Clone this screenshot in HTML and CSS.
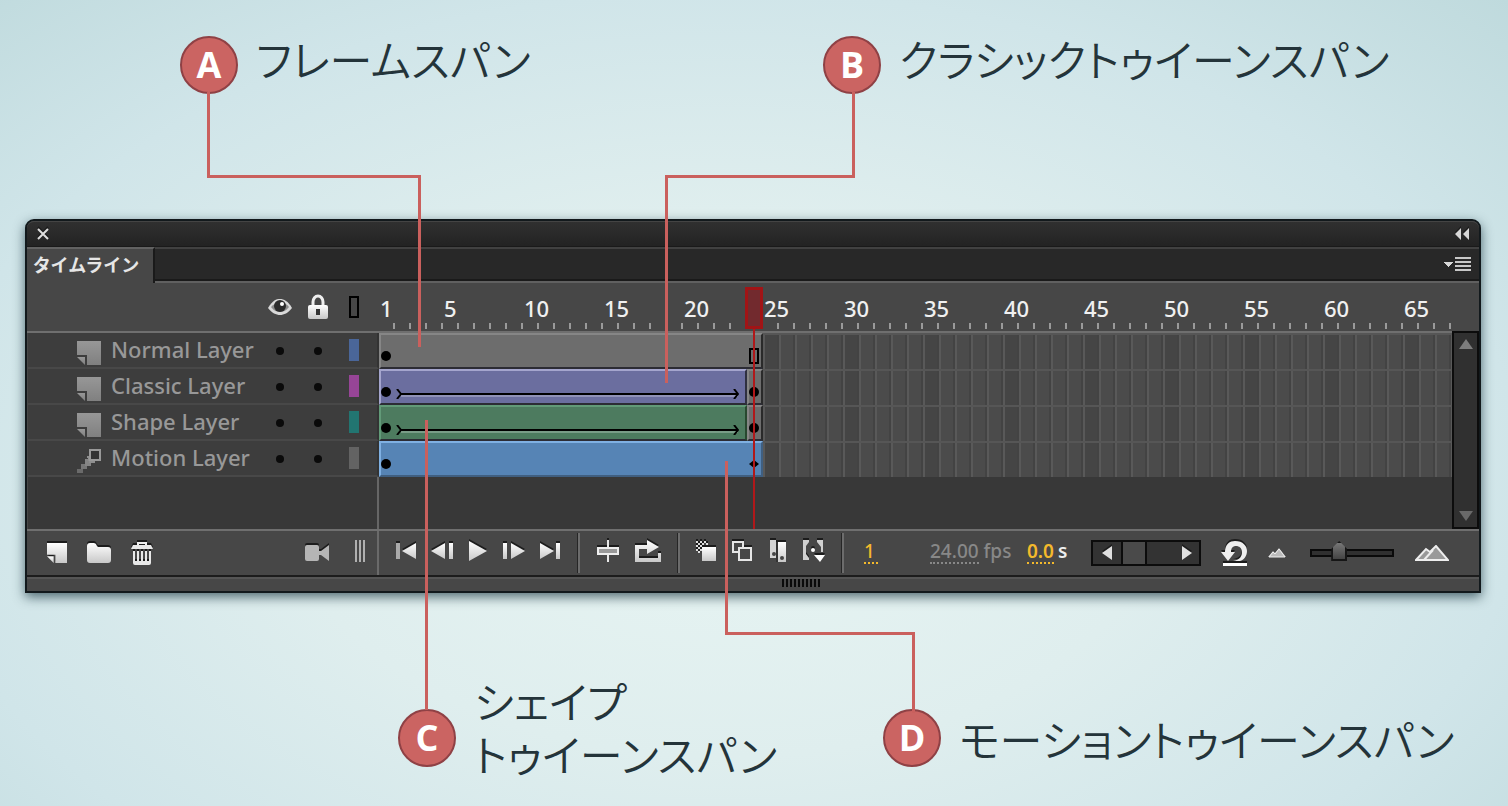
FILE: index.html
```html
<!DOCTYPE html>
<html lang="ja">
<head>
    <meta charset="UTF-8">
    <meta name="viewport" content="width=device-width, initial-scale=1.0">
    <title>タイムライン</title>
    <link rel="stylesheet" href="styles.css">
</head>
<body>

    <svg width="0" height="0" class="defs" aria-hidden="true">
        <defs>
            <linearGradient id="shine" x1="0" y1="0" x2="0" y2="1">
                <stop offset="0" stop-color="#fff"/>
                <stop offset="1" stop-color="#c8c8c8"/>
            </linearGradient>
            <linearGradient id="dull" x1="0" y1="0" x2="0" y2="1">
                <stop offset="0" stop-color="#979797"/>
                <stop offset="1" stop-color="#808080"/>
            </linearGradient>
            <symbol id="page" viewBox="0 0 24 24">
                <path d="M0 0h24v24H10V14H0z"/>
                <path d="M0 16h8v8z"/>
            </symbol>
        </defs>
    </svg>

    <div class="callouts callouts-top">
        <div class="callout">
            <span class="badge">A</span>
            <p class="caption">フレームスパン</p>
            <svg class="connector connector-a" width="216" height="255"><path d="M1.5 0V84.5H212.5V255"/></svg>
        </div>
        <div class="callout">
            <span class="badge">B</span>
            <p class="caption">クラシックトゥイーンスパン</p>
            <svg class="connector connector-b" width="190" height="291"><path d="M188.5 0V84.5H1.5V291"/></svg>
        </div>
    </div>

    <div class="panel">
        <div class="title-bar">
            <button aria-label="閉じる"><svg width="12" height="12"><path d="M1 1L11 11M11 1L1 11" stroke="#ddd" stroke-width="2"/></svg></button>
            <button aria-label="たたむ"><svg width="14" height="12"><path d="M6 0v12L0 6zM14 0v12L8 6z" fill="#d8d8d8"/></svg></button>
        </div>

        <div class="tab-bar">
            <button class="tab">タイムライン</button>
            <button class="menu" aria-label="メニュー">
                <svg width="28" height="16" shape-rendering="crispEdges"><path d="M0 5h10L5 10z" fill="#d8d8d8"/><path d="M12 0h16v2H12zM12 4h16v2H12zM12 8h16v2H12zM12 12h16v2H12z" fill="#c8c8c8"/></svg>
            </button>
        </div>

        <div class="timeline">
            <div class="layers">
                <div class="layer-head">
                    <span></span>
                    <span></span>
                    <button aria-label="表示">
                        <svg width="24" height="20">
                            <path d="M0 11C5 3 8 2 12 2s8 2 12 9c-4 5-8 7-12 7S4 16 0 11z" fill="#d9d9d9"/>
                            <path d="M3 10C7 5 17 4 21 10c-3 4-6 5-9 5s-6-1-9-5z" fill="#8b8b8b"/>
                            <circle cx="12" cy="9" r="6" fill="#2b2b2b"/>
                            <circle cx="14" cy="7" r="2" fill="#fff"/>
                        </svg>
                    </button>
                    <button aria-label="ロック">
                        <svg width="20" height="26">
                            <path d="M5 13V8a5 6 0 0 1 10 0v5" fill="none" stroke="#eee" stroke-width="3"/>
                            <rect y="11" width="20" height="14" rx="2" fill="url(#shine)"/>
                            <path d="M8 15h4v6H8z" fill="#333"/>
                        </svg>
                    </button>
                    <button aria-label="アウトライン"><span class="outline-box"></span></button>
                </div>
                <div class="layer">
                    <svg class="layer-icon" width="24" height="24" fill="url(#dull)"><use href="#page"/></svg>
                    <span class="layer-name">Normal Layer</span>
                    <span class="dot"></span>
                    <span class="dot"></span>
                    <span class="swatch blue"></span>
                </div>
                <div class="layer">
                    <svg class="layer-icon" width="24" height="24" fill="url(#dull)"><use href="#page"/></svg>
                    <span class="layer-name">Classic Layer</span>
                    <span class="dot"></span>
                    <span class="dot"></span>
                    <span class="swatch purple"></span>
                </div>
                <div class="layer">
                    <svg class="layer-icon" width="24" height="24" fill="url(#dull)"><use href="#page"/></svg>
                    <span class="layer-name">Shape Layer</span>
                    <span class="dot"></span>
                    <span class="dot"></span>
                    <span class="swatch teal"></span>
                </div>
                <div class="layer">
                    <svg class="layer-icon" width="24" height="24" shape-rendering="crispEdges">
                        <path d="M0 20h6v4H0z" fill="#6a6a6a"/>
                        <path d="M4 15h6v5H4z" fill="#777"/>
                        <path d="M8 10h6v7H8z" fill="#858585"/>
                        <path d="M10 7h4v5h4v2h-6z" fill="#8e8e8e"/>
                        <path d="M13 1h10v10H13z" fill="#333" stroke="#999" stroke-width="2"/>
                    </svg>
                    <span class="layer-name">Motion Layer</span>
                    <span class="dot"></span>
                    <span class="dot"></span>
                    <span class="swatch gray"></span>
                </div>
            </div>

            <div class="frames">
                <div class="ruler">
                    <span class="first">1</span><span>5</span><span>10</span><span>15</span><span>20</span><span>25</span><span>30</span><span>35</span><span>40</span><span>45</span><span>50</span><span>55</span><span>60</span><span>65</span>
                </div>
                <div class="track">
                    <div class="tween plain">
                        <span class="key"></span>
                        <span class="end-frame"></span>
                    </div>
                </div>
                <div class="track">
                    <div class="tween classic">
                        <span class="key"></span>
                        <svg class="tail" width="6" height="10"><path d="M1 0L5 5L1 10"/></svg>
                        <span class="arrow-line"></span>
                        <svg class="head" width="6" height="10"><path d="M1 0L5 5L1 10"/></svg>
                    </div>
                    <div class="tween last"><span class="key"></span></div>
                </div>
                <div class="track">
                    <div class="tween shape">
                        <span class="key"></span>
                        <svg class="tail" width="6" height="10"><path d="M1 0L5 5L1 10"/></svg>
                        <span class="arrow-line"></span>
                        <svg class="head" width="6" height="10"><path d="M1 0L5 5L1 10"/></svg>
                    </div>
                    <div class="tween last"><span class="key"></span></div>
                </div>
                <div class="track">
                    <div class="tween motion">
                        <span class="key"></span>
                        <svg class="property-key" width="10" height="8"><path d="M5 0L10 4L5 8L0 4z"/></svg>
                    </div>
                </div>
                <div class="playhead"></div>
            </div>

            <div class="side">
                <div class="scroll-y">
                    <button aria-label="上へ"><svg width="14" height="10"><path d="M7 0L14 10H0z" fill="#7d7d7d"/></svg></button>
                    <button aria-label="下へ"><svg width="14" height="10"><path d="M0 0H14L7 10z" fill="#6a6a6a"/></svg></button>
                </div>
            </div>
        </div>

        <div class="toolbar">
            <div class="layer-tools">
                <button aria-label="新規レイヤー"><svg width="20" height="20" fill="url(#shine)"><use href="#page"/></svg></button>
                <button aria-label="新規フォルダー"><svg width="24" height="20"><path d="M0 3q0-3 3-3h4q2 0 3 3l1 1h10q3 0 3 3v10q0 3-3 3H3q-3 0-3-3z" fill="url(#shine)"/></svg></button>
                <button aria-label="削除">
                    <svg width="22" height="24"><path d="M7 5V2h8v3" fill="none" stroke="#eee" stroke-width="2"/><path d="M2 4h18l2 4H0zM2 10h2v10h2V10h2v10h2V10h2v10h2V10h2v10h2V10h2v12q0 2-2 2H4q-2 0-2-2z" fill="#e8e8e8"/></svg>
                </button>
                <button class="camera" aria-label="カメラ"><svg width="24" height="16"><path d="M2 0h10q2 0 2 2v4h2l8-6v16l-8-6h-2v4q0 2-2 2H2q-2 0-2-2V2q0-2 2-2z" fill="#b5b5b5"/></svg></button>
                <span class="grip"></span>
            </div>

            <div class="group">
                <button aria-label="最初のフレーム"><svg width="20" height="16"><path d="M0 0h4v16H0z" fill="#aaa"/><path d="M20 0v16L6 8z" fill="url(#shine)"/></svg></button>
                <button aria-label="前のフレーム"><svg width="22" height="16" fill="url(#shine)"><path d="M14 0v16L0 8zM18 0h4v16h-4z"/></svg></button>
                <button aria-label="再生"><svg width="18" height="20" fill="url(#shine)"><path d="M0 0L18 10L0 20z"/></svg></button>
                <button aria-label="次のフレーム"><svg width="22" height="16" fill="url(#shine)"><path d="M0 0h4v16H0zM8 0L22 8L8 16z"/></svg></button>
                <button aria-label="最後のフレーム"><svg width="20" height="16" fill="url(#shine)"><path d="M0 0L14 8L0 16zM16 0h4v16h-4z"/></svg></button>
            </div>
            <span class="divider"></span>
            <div class="group wide">
                <button aria-label="中央フレーム"><svg width="22" height="22" shape-rendering="crispEdges"><path d="M10 0h2v22h-2z" fill="#e8e8e8"/><path d="M1 8h20v6H1z" fill="#999" stroke="#eee" stroke-width="2"/></svg></button>
                <button aria-label="ループ"><svg width="26" height="22"><path d="M12 5H0v17h26V13h-3v5H4V9h8v5l12-7L12 0z" fill="url(#shine)"/></svg></button>
            </div>
            <span class="divider"></span>
            <div class="group">
                <button aria-label="オニオンスキン"><svg width="20" height="20" shape-rendering="crispEdges"><path d="M0 0h2v2H0zM4 0h2v2H4zM8 0h2v2H8zM2 2h2v2H2zM6 2h2v2H6zM10 2h2v2h-2zM0 4h2v2H0zM4 4h2v2H4zM2 6h2v2H2zM0 8h2v2H0zM4 8h2v2H4zM2 10h2v2H2z" fill="#ddd"/><path d="M6 6h14v14H6z" fill="url(#shine)"/></svg></button>
                <button aria-label="オニオンスキンのアウトライン"><svg width="20" height="20" shape-rendering="crispEdges" fill="#474747" stroke="#e6e6e6" stroke-width="2"><path d="M1 1h10v10H1z"/><path d="M7 7h12v12H7z"/></svg></button>
                <button aria-label="複数フレームの編集"><svg width="16" height="22"><path d="M0 0h6v18H0z" fill="#d4d4d4"/><path d="M6 2h2v20H6z" fill="#333"/><path d="M8 2h8v20H8z" fill="url(#shine)"/><circle cx="4" cy="14" r="2" fill="#444"/><circle cx="12" cy="18" r="2" fill="#444"/></svg></button>
                <button aria-label="マーカーの変更"><svg width="22" height="22"><path d="M0 0h6v2L3 6v8l3 4v2H0zM14 0h6v12h-2V7l-4-5z" fill="#d0d0d0"/><circle cx="10" cy="10" r="2" fill="#fff"/><path d="M11 15h11l-5 7z" fill="#fff"/></svg></button>
            </div>
            <span class="divider"></span>

            <div class="readout">
                <button class="hot current">1</button>
                <span class="rate"><button class="hot">24.00</button> fps</span>
                <span class="time"><button class="hot">0.0</button>s</span>
            </div>

            <div class="scroll-x">
                <button aria-label="左へ"><svg width="10" height="14"><path d="M10 0v14L0 7z" fill="#e0e0e0"/></svg></button>
                <span class="thumb"></span>
                <button aria-label="右へ"><svg width="10" height="14"><path d="M0 0L10 7L0 14z" fill="#e0e0e0"/></svg></button>
            </div>

            <div class="zoom">
                <button aria-label="リセット">
                    <svg width="26" height="26"><path d="M0 12h4C4 4 9 1 14 1c8 0 12 5 12 10 0 5-3 9-7 10h-7c7-1 9-5 9-9 0-4-3-6-6-6s-5 2-5 6h4l-7 9z" fill="#eee"/><path d="M2 23h24v3H2z" fill="#fff"/></svg>
                </button>
                <svg width="18" height="10"><path d="M0 9L5 3L7 5L11 0L18 9z" fill="#bbb"/><path d="M1 9L5 4L7 6L11 1L17 9z" fill="none" stroke="#eee"/></svg>
                <input type="range" min="0" max="100" value="30" aria-label="フレーム幅">
                <svg width="34" height="16"><path d="M1 15L11 4L15 7L21 1L33 15z" fill="#999" stroke="#eee" stroke-width="2"/><path d="M9 15L18 5" stroke="#eee" stroke-width="2"/></svg>
            </div>
        </div>

        <div class="status"><span class="resize"></span></div>
    </div>

    <div class="callouts callouts-bottom">
        <div class="callout">
            <span class="badge">C</span>
            <p class="caption">シェイプ<br>トゥイーンスパン</p>
            <svg class="connector connector-c" width="3" height="290"><path d="M1.5 0V290"/></svg>
        </div>
        <div class="callout">
            <span class="badge">D</span>
            <p class="caption">モーショントゥイーンスパン</p>
            <svg class="connector connector-d" width="190" height="252"><path d="M1.5 0V172.5H188.5V252"/></svg>
        </div>
    </div>

</body>
</html>
```

FILE: styles.css
```css
* {
    box-sizing: border-box;
}

body {
    margin: 0;
    min-height: 100vh;
    padding: 36px 27px 0 25px;
    font-family: "Noto Sans", "Noto Sans CJK JP", sans-serif;
    background: radial-gradient(ellipse at 48% 60%, #e8f5f3 0%, #dfeeee 40%, #d0e5e9 72%, #bfdadd 100%);
    overflow-x: hidden;
}

button {
    display: flex;
    align-items: center;
    justify-content: center;
    padding: 0;
    border: none;
    background: none;
    color: inherit;
    font: inherit;
    cursor: pointer;
}

svg {
    display: block;
}

.defs {
    position: absolute;
}

/* callouts */

.callouts {
    display: grid;
}

.callouts-top {
    grid-template-columns: 643px 1fr;
    height: 183px;
    padding-left: 155px;
}

.callouts-bottom {
    grid-template-columns: 485px 1fr;
    align-items: center;
    padding: 81px 0 0 373px;
}

.callout {
    position: relative;
    display: flex;
    align-items: center;
    gap: 18px;
}

.callouts-top .callout {
    height: 58px;
}

.badge {
    width: 58px;
    height: 58px;
    flex: none;
    border: 2px solid #8f4145;
    border-radius: 50%;
    background: #cb6462;
    color: #fff;
    font-family: "Open Sans", sans-serif;
    font-size: 36px;
    font-weight: 700;
    line-height: 54px;
    text-align: center;
}

.caption {
    margin: 0;
    color: #24343a;
    font-family: "Noto Sans CJK JP", sans-serif;
    font-size: 43px;
    font-weight: 350;
    line-height: 53px;
    font-feature-settings: "palt";
    white-space: nowrap;
}

.callouts-top .caption {
    padding-bottom: 14px;
}

.callouts-bottom .callout:first-child .caption {
    padding-bottom: 22px;
}

.connector {
    position: absolute;
    z-index: 2;
    fill: none;
    stroke: #ca605d;
    stroke-width: 3;
    pointer-events: none;
}

.connector-a {
    left: 27px;
    top: 56px;
}

.connector-b {
    left: -158px;
    top: 56px;
}

.connector-c {
    left: 27px;
    bottom: 92px;
}

.connector-d {
    left: -158px;
    bottom: 54px;
}

/* panel */

.panel {
    border: 2px solid #12191c;
    border-radius: 9px 9px 0 0;
    background: #474747;
    box-shadow: 0 4px 12px rgba(20, 50, 60, 0.7);
}

.title-bar {
    display: flex;
    align-items: center;
    justify-content: space-between;
    height: 26px;
    padding: 0 10px;
    border-top: 1px solid #444;
    border-bottom: 1px solid #1a1a1a;
    border-radius: 7px 7px 0 0;
    background: linear-gradient(#303030, #232323);
}

.tab-bar {
    display: flex;
    justify-content: space-between;
    height: 36px;
    background: #282828;
    box-shadow: inset 0 2px #414141, inset 0 -2px #606060, inset 0 -4px #1a1a1a;
}

.tab {
    width: 128px;
    padding: 0 8px 4px 0;
    border-top: 2px solid #626262;
    border-right: 2px solid #1a1a1a;
    background: #474747;
    color: #e6e6e6;
    font-size: 18px;
    font-weight: 700;
}

.menu {
    padding: 0 8px 0 0;
}

.timeline {
    display: grid;
    grid-template-columns: 352px 1fr 27px;
    height: 246px;
    background: #383838;
}

.layers {
    border-left: 1px solid #484848;
    border-right: 2px solid #666;
}

.layer-head,
.layer {
    display: grid;
    grid-template-columns: 83px 150px 38px 38px 34px;
    align-items: center;
    justify-items: center;
    margin-right: -2px;
}

.layer-head {
    height: 50px;
    margin-left: -1px;
    padding-left: 1px;
    border-bottom: 2px solid #6f6f6f;
    background: #474747;
}

.outline-box {
    width: 10px;
    height: 22px;
    border: 2px solid #000;
}

.layer {
    height: 36px;
    border-bottom: 2px solid #484848;
    border-right: 2px solid #333;
    background: #3d3d3d;
}

.layer-icon {
    justify-self: start;
    margin: 6px 0 0 49px;
}

.layer-name {
    justify-self: start;
    padding-bottom: 2px;
    color: #989898;
    font-size: 22px;
    font-weight: 500;
    line-height: 32px;
    white-space: nowrap;
}

.dot {
    width: 8px;
    height: 8px;
    margin-top: 2px;
    border-radius: 50%;
    background: #0a0a0a;
}

.swatch {
    width: 10px;
    height: 22px;
}

.blue {
    background: #4a6699;
}

.purple {
    background: #974597;
}

.teal {
    background: #227571;
}

.gray {
    background: #636363;
}

/* frames, 16px each */

.frames {
    position: relative;
    min-width: 0;
}

.ruler {
    display: flex;
    height: 50px;
    overflow: hidden;
    border-bottom: 2px solid #6f6f6f;
    background: repeating-linear-gradient(90deg, transparent 0 14px, #9a9a9a 14px 16px) 0 40px / 100% 6px no-repeat #474747;
}

.ruler span {
    flex: none;
    width: 80px;
    padding-left: 1px;
    color: #f0f0f0;
    font-size: 22px;
    font-weight: 500;
    line-height: 50px;
}

.ruler .first {
    width: 64px;
}

.track {
    display: flex;
    height: 36px;
    background:
        linear-gradient(#565656 0 2px, transparent 2px),
        repeating-linear-gradient(90deg, #595959 0 2px, transparent 2px 14px, #434343 14px 16px),
        repeating-linear-gradient(90deg, #454545 0 16px, #4b4b4b 16px 80px) -16px 0 / calc(100% + 16px) 100%;
}

.tween {
    display: flex;
    align-items: center;
    height: 36px;
    padding: 10px 2px 0 0;
    border-top: 2px solid;
    border-left: 2px solid;
    border-bottom: 2px solid #2c2c34;
}

.plain,
.motion {
    width: 384px;
    justify-content: space-between;
    border-right: 2px solid #2a2a2a;
}

.plain {
    background: #6d6d6d;
    border-top-color: #868686;
    border-left-color: #868686;
}

.motion {
    background: #5684b5;
    border-top-color: #7fb0e2;
    border-left-color: #7fb0e2;
    border-bottom-color: #405f80;
    border-right-color: #405f80;
}

.classic,
.shape {
    width: 368px;
    gap: 5px;
    padding-right: 6px;
    border-right: 2px solid #2f3040;
}

.classic {
    background: #6b6e9f;
    border-top-color: #a4a5cd;
    border-left-color: #a4a5cd;
}

.shape {
    background: #4d7b5f;
    border-top-color: #629a78;
    border-left-color: #629a78;
    border-right-color: #28482f;
}

.last {
    width: 16px;
    border-color: #868686 #2a2a2a #2c2c34 #868686;
    border-right: 2px solid #2a2a2a;
    background: #6d6d6d;
}

.key {
    width: 10px;
    height: 10px;
    flex: none;
    border-radius: 50%;
    background: #000;
}

.end-frame {
    width: 10px;
    height: 16px;
    border: 2px solid #000;
}

.tail,
.head {
    flex: none;
    margin-top: 4px;
    fill: none;
    stroke: #000;
    stroke-width: 2;
}

.arrow-line {
    flex: 1;
    height: 4px;
    margin: 6px -6px 0;
    border-top: 2px solid #000;
    background: rgba(255, 255, 255, 0.25);
}

.head {
    margin-left: -4px;
}

.playhead {
    position: absolute;
    left: 366px;
    top: 4px;
    width: 18px;
    height: 42px;
    border: 3px solid #a11416;
    background: rgba(125, 35, 40, 0.8);
}

.playhead::after {
    content: "";
    position: absolute;
    left: 5px;
    top: 39px;
    width: 2px;
    height: 200px;
    background: #b0181a;
}

.side {
    display: flex;
    padding-top: 48px;
    background: #474747;
}

.scroll-y {
    display: flex;
    flex: 1;
    flex-direction: column;
    justify-content: space-between;
    align-items: center;
    padding: 6px 0;
    border: 2px solid #0c0c0c;
    background: #303030;
}

/* toolbar */

.toolbar {
    display: flex;
    align-items: center;
    height: 46px;
    border-top: 2px solid #6f6f6f;
    background: #474747;
}

.toolbar button svg,
.title-bar svg {
    filter: drop-shadow(0 -2px 0 #1c1c1c);
}

.layer-tools {
    display: flex;
    align-items: center;
    gap: 20px;
    width: 352px;
    height: 44px;
    padding: 0 12px 0 20px;
    border-right: 2px solid #6a6a6a;
}

.camera {
    margin-left: auto;
}

.grip {
    width: 10px;
    height: 22px;
    margin: 0 0 4px 6px;
    background: repeating-linear-gradient(90deg, #b0b0b0 0 2px, transparent 2px 4px);
}

.group {
    display: flex;
    padding-bottom: 4px;
}

.layer-tools + .group {
    margin-left: 9px;
}

.group button {
    width: 36px;
    height: 28px;
}

.group.wide button {
    width: 40px;
}

.divider {
    width: 2px;
    height: 40px;
    margin: 0 8px 0 10px;
    background: #6c6c6c;
    box-shadow: -1px 0 #262626;
}

.readout {
    display: flex;
    align-items: center;
    padding: 0 0 2px 12px;
    font-size: 19px;
    font-weight: 500;
    line-height: 22px;
}

.hot {
    display: inline-block;
    border-bottom: 2px dotted currentColor;
}

.current,
.time .hot {
    color: #f3b92c;
}

.current {
    width: 14px;
    margin-right: 52px;
    text-align: left;
}

.rate {
    width: 97px;
    color: #888;
    white-space: nowrap;
}

.time {
    display: flex;
    gap: 4px;
    width: 64px;
    color: #eee;
    font-weight: 600;
}

.scroll-x {
    display: flex;
    width: 110px;
    height: 26px;
    border: 2px solid #0c0c0c;
    background: #333;
}

.scroll-x button {
    width: 28px;
}

.scroll-x .thumb {
    width: 26px;
    margin: -2px 10px -2px 0;
    border: 2px solid #0c0c0c;
    background: #4a4a4a;
}

.scroll-x button:last-child {
    margin-left: auto;
    width: 24px;
}

.zoom {
    display: flex;
    align-items: center;
    gap: 21px;
    margin-left: 20px;
}

.zoom input {
    -webkit-appearance: none;
    appearance: none;
    width: 84px;
    height: 22px;
    margin: 0 0 0 3px;
    background: none;
}

.zoom input::-webkit-slider-runnable-track {
    height: 8px;
    border: 2px solid #0a0a0a;
    background: #303030;
}

.zoom input::-webkit-slider-thumb {
    -webkit-appearance: none;
    width: 16px;
    height: 20px;
    margin-top: -10px;
    border: 2px solid #161616;
    background: linear-gradient(#777, #444);
    clip-path: polygon(50% 0, 100% 40%, 100% 100%, 0 100%, 0 40%);
}

.status {
    height: 16px;
    padding-top: 2px;
    border-top: 2px solid #1c1c1c;
    box-shadow: inset 0 2px #555;
}

.resize {
    display: block;
    width: 38px;
    height: 8px;
    margin-left: 52%;
    background: repeating-linear-gradient(90deg, #0a0a0a 0 2px, transparent 2px 4px);
}
```
